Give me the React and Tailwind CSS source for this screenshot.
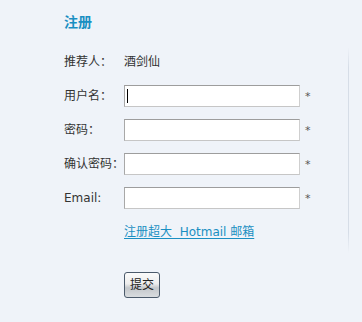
import React from 'react';

const font = { fontFamily: '"DejaVu Sans", "Noto Sans CJK SC", sans-serif' };

function Field({ label, caret }) {
  return (
    <div className="flex items-center h-[22px]">
      <span className="w-[60px] shrink-0">{label}</span>
      <div className="relative">
        <input
          type="text"
          className="block w-[176px] h-[22px] bg-white border border-t-[#9d9d9d] border-l-[#a8a8a8] border-r-[#cfcfcf] border-b-[#c6c6c6] outline-none px-1 text-xs"
        />
        {caret && <span className="absolute left-[3px] top-[4px] w-px h-[14px] bg-black" />}
      </div>
      <span className="ml-[5px] text-[11px] text-[#555] leading-none">*</span>
    </div>
  );
}

export default function App() {
  return (
    <main className="min-h-[322px] bg-[#eff3f9] text-[#333] text-xs flex" style={font}>
      {/* form column */}
      <div className="w-[348px] shrink-0 pl-16 pt-3">
        <h1 className="text-[14px] leading-5 font-bold text-[#1a8fc2] mb-[19px]">注册</h1>

        <div className="flex flex-col gap-3">
          <div className="flex items-center h-[22px]">
            <span className="w-[60px] shrink-0">推荐人：</span>
            <span>酒剑仙</span>
          </div>
          <Field label="用户名：" caret />
          <Field label="密码：" />
          <Field label="确认密码：" />
          <Field label="Email:" />
          <div className="flex items-center h-[22px] pl-[60px]">
            <a href="#" className="text-[#1a8fc2] underline underline-offset-2">
              注册超大&nbsp; Hotmail 邮箱
            </a>
          </div>
        </div>

        <div className="pl-[60px] mt-[29px]">
          <button
            type="button"
            className="w-9 h-[26px] border border-[#4b5a6b] rounded-[3px] text-[#222] text-xs bg-[linear-gradient(to_bottom,#fbfbfb_0%,#ededed_45%,#c3c7cb_62%,#d9dcdf_100%)]"
          >
            提交
          </button>
        </div>
      </div>

      {/* right divider */}
      <div className="mt-[47px] w-px h-[206px] bg-[linear-gradient(to_bottom,#eff3f9_0%,#d6dde7_10%,#d6dde7_90%,#eff3f9_100%)]" />
    </main>
  );
}
